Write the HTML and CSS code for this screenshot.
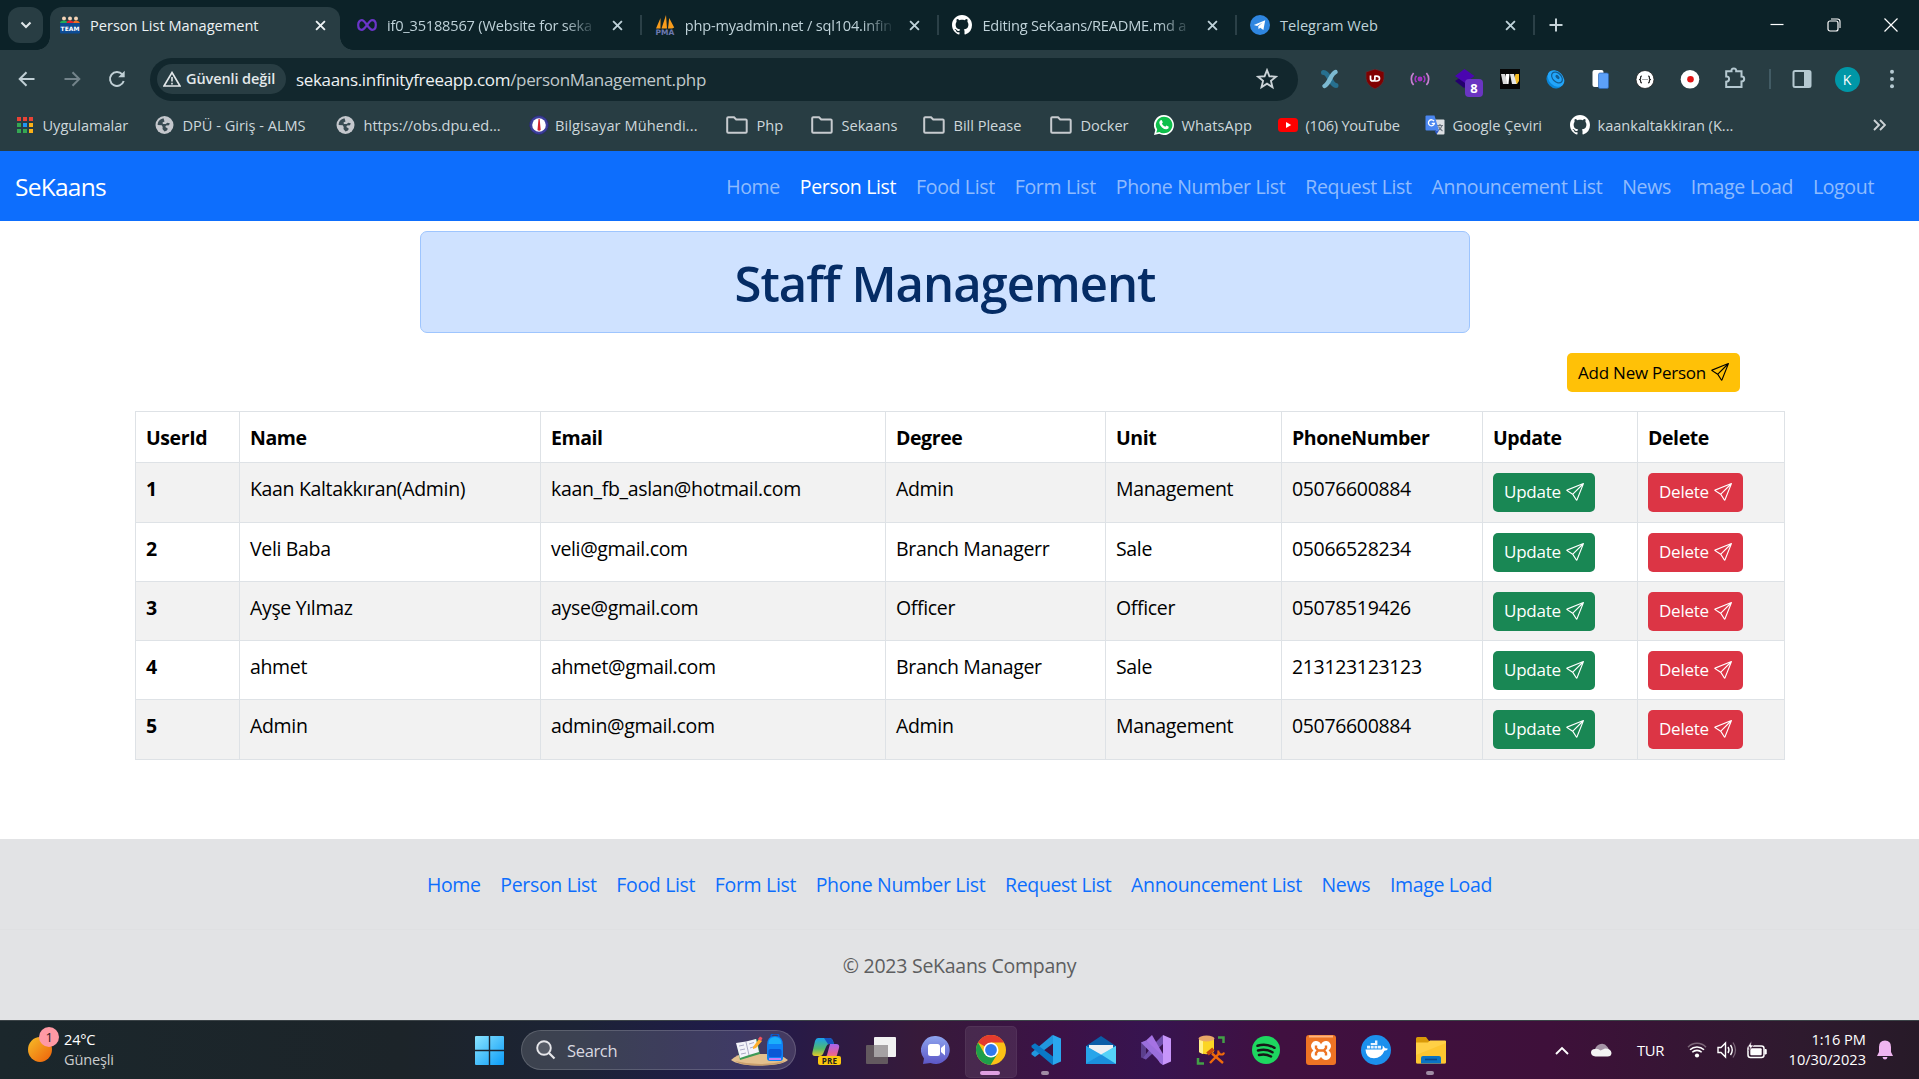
FILE: index.html
```html
<!DOCTYPE html>
<html lang="en">
<head>
<meta charset="utf-8">
<title>Person List Management</title>
<link rel="stylesheet" href="styles.css">
</head>
<body>
<svg class="defs" aria-hidden="true">
  <symbol id="send" viewBox="0 0 16 16"><path fill="currentColor" d="M15.854.146a.5.5 0 0 1 .11.54l-5.819 14.547a.75.75 0 0 1-1.329.124l-3.178-4.995L.643 7.184a.75.75 0 0 1 .124-1.33L15.314.037a.5.5 0 0 1 .54.11ZM6.636 10.07l2.761 4.338L14.13 2.576 6.636 10.07Zm6.787-8.201L1.591 6.602l4.339 2.76 7.494-7.493Z"/></symbol>
  <symbol id="github" viewBox="0 0 16 16"><path fill="#fff" d="M8 0C3.58 0 0 3.58 0 8c0 3.54 2.29 6.53 5.47 7.59.4.07.55-.17.55-.38 0-.19-.01-.82-.01-1.49-2.01.37-2.53-.49-2.69-.94-.09-.23-.48-.94-.82-1.13-.28-.15-.68-.52-.01-.53.63-.01 1.08.58 1.23.82.72 1.21 1.87.87 2.33.66.07-.52.28-.87.51-1.07-1.78-.2-3.64-.89-3.64-3.95 0-.87.31-1.59.82-2.15-.08-.2-.36-1.02.08-2.12 0 0 .67-.21 2.2.82.64-.18 1.32-.27 2-.27.68 0 1.36.09 2 .27 1.53-1.04 2.2-.82 2.2-.82.44 1.1.16 1.92.08 2.12.51.56.82 1.27.82 2.15 0 3.07-1.87 3.75-3.65 3.95.29.25.54.73.54 1.48 0 1.07-.01 1.93-.01 2.2 0 .21.15.46.55.38A8.013 8.013 0 0016 8c0-4.42-3.58-8-8-8z"/></symbol>
  <symbol id="close" viewBox="0 0 10 10"><path d="M1 1l8 8M9 1l-8 8" fill="none" stroke="currentColor" stroke-width="1.7"/></symbol>
  <symbol id="folder" viewBox="0 0 22 18"><path d="M1.200 2.200q0-1 1-1h5.800l2.200 2.300h9.500q1 0 1 1v11.200q0 1-1 1H2.200q-1 0-1-1z" fill="none" stroke="#c7cbcf" stroke-width="2"/></symbol>
  <symbol id="globe" viewBox="0 0 18 18"><circle cx="9" cy="9" r="9" fill="#c5c8cd"/><path d="M8 2.200C4 3 2 6 2.200 9l4 .3 1 1.700-.2 2 2 2.400c2 0 3.200-1.500 3.200-2.800L9.800 11l.7-1.500 3-.2.8-2-2.500-.6-1.600 1.300H7.400L7 6.400l2-1z" fill="#3a4c53"/></symbol>
</svg>

<header class="chrome">
  <div class="tabstrip">
    <div class="tab-search"><svg width="12" height="8" viewBox="0 0 12 8"><path d="M1.500 1.500L6 6l4.500-4.500" fill="none" stroke="#dfe6e9" stroke-width="2.100"/></svg></div>
    <div class="tab active">
      <svg class="fav" viewBox="0 0 20 18"><g fill="#f5d3b5"><circle cx="4" cy="2.600" r="2"/><circle cx="10" cy="2.600" r="2"/><circle cx="16" cy="2.600" r="2"/></g><path d="M0 7q0-2.500 4-2.500T7 7z" fill="#1faa59"/><path d="M13 7q0-2.500 3-2.500T20 7z" fill="#f26b21"/><path d="M6.500 7q0-2.500 3.500-2.500T13.500 7z" fill="#e5202e"/><rect y="7" width="20" height="10.500" rx="1" fill="#0d4c94"/><text x="10" y="14.600" text-anchor="middle" class="team">TEAM</text></svg>
      <span class="tab-title">Person List Management</span>
      <svg class="x"><use href="#close"/></svg>
    </div>
    <div class="tab nosep">
      <svg class="fav" viewBox="0 0 20 18"><path d="M10 9C7.500 5.500 6.500 4.200 4.800 4.200 2.700 4.200 1.200 6 1.200 9s1.500 4.800 3.600 4.800C6.500 13.800 7.500 12.500 10 9s3.500-4.800 5.200-4.800c2.100 0 3.600 1.800 3.600 4.800s-1.500 4.800-3.600 4.800C13.500 13.800 12.500 12.500 10 9z" fill="none" stroke="#6b35c9" stroke-width="2.200"/></svg>
      <span class="tab-title fade">if0_35188567 (Website for seka</span>
      <svg class="x"><use href="#close"/></svg>
    </div>
    <div class="tab">
      <svg class="fav" viewBox="0 0 20 20"><path d="M1 13.500L5.500 3v10.500zM6.500 13.500L11 0l1 13.500zM13 13.500L14.200 3l5 9.500-2 1z" fill="#f89c1c"/><text x="10" y="19.700" text-anchor="middle" class="pma">PMA</text></svg>
      <span class="tab-title fade">php-myadmin.net / sql104.infin</span>
      <svg class="x"><use href="#close"/></svg>
    </div>
    <div class="tab">
      <svg class="fav"><use href="#github"/></svg>
      <span class="tab-title fade">Editing SeKaans/README.md a</span>
      <svg class="x"><use href="#close"/></svg>
    </div>
    <div class="tab">
      <svg class="fav" viewBox="0 0 20 20"><circle cx="10" cy="10" r="10" fill="#2f86e0"/><path d="M3.800 10L15.200 5.200 13.400 15l-3.200-2.300-1.600 1.600-.4-3.100 4.400-3.600-5.500 3.400z" fill="#fff"/></svg>
      <span class="tab-title">Telegram Web</span>
      <svg class="x"><use href="#close"/></svg>
    </div>
    <svg class="plus" viewBox="0 0 14 14"><path d="M7 .5v13M.5 7h13" stroke="#c6d3d8" stroke-width="2"/></svg>
    <div class="winctl">
      <svg viewBox="0 0 14 14"><path d="M.5 6.500h13" stroke="#fff" stroke-width="1.200"/></svg>
      <svg viewBox="0 0 14 14"><rect x="1" y="3" width="10" height="10" rx="2" fill="none" stroke="#fff" stroke-width="1.200"/><path d="M4 1h6.500q2.500 0 2.500 2.500V10" fill="none" stroke="#fff" stroke-width="1.100"/></svg>
      <svg viewBox="0 0 14 14"><path d="M.5.5l13 13M13.500.5l-13 13" stroke="#fff" stroke-width="1.200"/></svg>
    </div>
  </div>

  <div class="toolbar">
    <div class="navbtns">
      <svg viewBox="0 0 20 20"><path d="M17.500 10H3M9.500 3.200L2.700 10l6.800 6.800" fill="none" stroke="#c0cfd5" stroke-width="2"/></svg>
      <svg viewBox="0 0 20 20"><path d="M2.500 10H17M10.500 3.200l6.800 6.800-6.800 6.800" fill="none" stroke="#73838a" stroke-width="2"/></svg>
      <svg viewBox="0 0 20 20"><path d="M16.700 12A7 7 0 1 1 15.300 5.300" fill="none" stroke="#c0cfd5" stroke-width="2"/><path d="M17.700 1.800V8.300H11.200z" fill="#c0cfd5"/></svg>
    </div>
    <div class="omnibox">
      <span class="chip"><svg width="18" height="16" viewBox="0 0 18 16"><path d="M9 1.500L17 15H1z" fill="none" stroke="#e3e8ea" stroke-width="1.600"/><path d="M9 6v4.500M9 11.800v1.600" stroke="#e3e8ea" stroke-width="1.600"/></svg>Güvenli değil</span>
      <span class="url"><b>sekaans.infinityfreeapp.com</b>/personManagement.php</span>
      <svg class="star" viewBox="0 0 20 20"><path d="M10 2l2.200 5.500 5.900.4-4.500 3.800 1.400 5.800-5-3.200-5 3.200 1.400-5.800L1.900 7.900l5.900-.4z" fill="none" stroke="#cbd3d7" stroke-width="1.700"/></svg>
    </div>
    <div class="exts">
      <svg viewBox="0 0 20 20"><path d="M3.500 3.500q3 0 6.500 6.500t6 6.500" fill="none" stroke="#27708f" stroke-width="5" stroke-linecap="round"/><path d="M15.500 3Q13 4 10 10t-5.500 7" fill="none" stroke="#7cb9d0" stroke-width="4.500" stroke-linecap="round"/></svg>
      <svg viewBox="0 0 20 20"><path d="M10 0l9 3v6.500Q18.500 16 10 20 1.500 16 1 9.500V3z" fill="#800000" stroke="#50343a" stroke-width=".8"/><path d="M5.500 6.500v3.200q0 2.300 2.200 2.300t2.200-2.300V6.500M10 7.200h1.500q3 0 3 2.400T11.500 12H9.500" fill="none" stroke="#fff" stroke-width="1.700"/></svg>
      <svg viewBox="0 0 20 20" fill="none" stroke="#a835c4" stroke-width="1.700"><circle cx="10" cy="10" r="1.600" fill="#a220c0"/><path d="M6.500 6.800a4.600 4.600 0 0 0 0 6.400M13.500 6.800a4.600 4.600 0 0 1 0 6.400"/><path d="M3.600 4a9 9 0 0 0 0 12M16.400 4a9 9 0 0 1 0 12" stroke="#c780d2"/></svg>
      <span class="ext-badged"><svg viewBox="0 0 20 20"><path d="M0 12l9-6 9 6-9 7z" fill="#25006e"/><path d="M0 7l9.500-7 10 7-9.500 7z" fill="#4a05b0"/></svg><i>8</i></span>
      <svg viewBox="0 0 20 20"><rect width="20" height="20" fill="#060606"/><path d="M6 5h3.500l-1 10H4z" fill="#fff"/><path d="M1 5h4l2.500 10H3z" fill="#d9d9d9"/><path d="M15.500 5H19v7l-2 3h-4z" fill="#f4bc27"/><path d="M10 5h4l2.500 10H12z" fill="#e6e6e6"/></svg>
      <svg viewBox="0 0 20 20"><ellipse cx="9.500" cy="11.500" rx="7" ry="9" transform="rotate(-45 9.500 11.500)" fill="#0a86d8"/><ellipse cx="11" cy="9.500" rx="7" ry="9.500" transform="rotate(-45 11 9.500)" fill="#22a5fa"/><ellipse cx="12" cy="8.500" rx="4.300" ry="6.300" transform="rotate(-45 12 8.500)" fill="none" stroke="#135c91" stroke-width="1.200"/><ellipse cx="12.500" cy="8" rx="1.500" ry="2.500" transform="rotate(-45 12.500 8)" fill="#135c91"/></svg>
      <svg viewBox="0 0 20 20"><rect x="2.500" y="1" width="11" height="17" rx="2" fill="#fff"/><rect x="8.500" y="4" width="10" height="15.500" rx="1.500" fill="#5ca0f8" stroke="#2b65b5" stroke-width=".7"/></svg>
      <svg viewBox="0 0 20 20"><circle cx="10" cy="10.500" r="9" fill="#fff" stroke="#222" stroke-width=".8"/><path d="M7 7q-1.500 0-1.400 1.800T4 10.500q1.700 0 1.600 1.700T7 14M13 7q1.500 0 1.400 1.800T16 10.500q-1.700 0-1.600 1.700T13 14" fill="none" stroke="#222" stroke-width="1.200"/><path d="M7.500 10.500h1M9.500 10.500h1M11.500 10.500h1" stroke="#555" stroke-width="1.200"/></svg>
      <svg viewBox="0 0 20 20"><circle cx="10" cy="10.300" r="9.300" fill="#fff"/><circle cx="10.500" cy="10.300" r="3.300" fill="#e11414"/></svg>
      <svg class="puzzle" viewBox="0 0 22 22"><path d="M2.200 4.200h5.300q-.3-2.700 2.300-2.700t2.400 2.700h5.300v5.300q2.700 0 2.700 2.400t-2.700 2.500v5.700H2.200v-5.400q2.900 0 2.900-2.700t-2.900-2.600z" fill="none" stroke="#b5c9d1" stroke-width="2"/></svg>
    </div>
    <i class="vsep"></i>
    <div class="exts tail">
      <svg viewBox="0 0 20 20"><rect x="1.500" y="2" width="17" height="16" rx="1.500" fill="none" stroke="#b5c9d1" stroke-width="2"/><path d="M12 2h6.500v16H12z" fill="#b5c9d1"/></svg>
      <span class="avatar">K</span>
      <svg viewBox="0 0 20 20" fill="#b5c9d1"><circle cx="10" cy="2.800" r="2"/><circle cx="10" cy="10" r="2"/><circle cx="10" cy="17.200" r="2"/></svg>
    </div>
  </div>

  <div class="bookmarks">
    <span><svg width="18" height="18" viewBox="0 0 18 18"><path d="M1 1h4v4H1zM7 1h4v4H7zM13 1h4v4h-4z" fill="#ea4335"/><path d="M1 7h4v4H1zM1 13h4v4H1z" fill="#34a853"/><path d="M7 7h4v4H7z" fill="#2196f3"/><path d="M7 13h4v4H7z" fill="#34a853"/><path d="M13 7h4v4h-4zM13 13h4v4h-4z" fill="#fbb117"/></svg>Uygulamalar</span>
    <span><svg width="19" height="18"><use href="#globe"/></svg>DPÜ - Giriş - ALMS</span>
    <span><svg width="19" height="18"><use href="#globe"/></svg>https://obs.dpu.ed...</span>
    <span class="wide"><svg width="20" height="20" viewBox="0 0 20 20"><circle cx="10" cy="10" r="9.300" fill="#3d3f9c" stroke="#2a2b75" stroke-dasharray="2 1"/><circle cx="10" cy="10" r="6.800" fill="#fff"/><path d="M9.500 4h1.200l1 11q-1.500 1.500-3.200 0z" fill="#d3212d"/></svg>Bilgisayar Mühendi...</span>
    <span><svg width="22" height="18"><use href="#folder"/></svg>Php</span>
    <span><svg width="22" height="18"><use href="#folder"/></svg>Sekaans</span>
    <span><svg width="22" height="18"><use href="#folder"/></svg>Bill Please</span>
    <span><svg width="22" height="18"><use href="#folder"/></svg>Docker</span>
    <span class="wide"><svg width="20" height="20" viewBox="0 0 20 20"><path d="M10 0a10 10 0 1 1-4.800 18.800L0 20l1.300-5A10 10 0 0 1 10 0z" fill="#fff"/><path d="M10 1.700a8.300 8.300 0 1 1-4.500 15.200l-3.200.9.900-3.200A8.300 8.300 0 0 1 10 1.700z" fill="#0fbf4b"/><path d="M6.300 5.500q1.300-1 1.900.5l.6 1.500-.9 1.200q1 2 3.400 3l1.100-1.200 2.400 1.200q.2 2.200-2.200 2.600-2.200.2-4.600-1.900Q5.300 10 5.300 7.700q0-1.400 1-2.200z" fill="#fff"/></svg>WhatsApp</span>
    <span class="tight"><svg width="20" height="20" viewBox="0 0 20 20"><rect y="3" width="20" height="14" rx="3.500" fill="#f00"/><path d="M8 7l5.200 3L8 13z" fill="#fff"/></svg>(106) YouTube</span>
    <span><svg width="20" height="20" viewBox="0 0 20 20"><path d="M8 4.500h10.500q1 0 1 1v13q0 1-1 1H12z" fill="#dcdfe3"/><path d="M12 10.500h6M15 9v1.500M17 10.500q-1 3.500-4 5M13.500 11.500q1 2.500 4 4.500" stroke="#6d7680" fill="none" stroke-width="1.100"/><path d="M1.500.5h8L14 15.500H1.500q-1 0-1-1v-13q0-1 1-1z" fill="#4a86f0"/><path d="M9 6.200A3 3 0 1 0 9.400 8.300H6.700" fill="none" stroke="#fff" stroke-width="1.300"/><path d="M9.500 15.500H14l-2.500 4z" fill="#2d58c5"/></svg>Google Çeviri</span>
    <span><svg width="20" height="20"><use href="#github"/></svg>kaankaltakkiran (K...</span>
    <svg class="more" width="13" height="12" viewBox="0 0 13 12"><path d="M1 1l5 5-5 5M7 1l5 5-5 5" fill="none" stroke="#cdd3d6" stroke-width="1.900"/></svg>
  </div>
</header>

<main class="page">
  <nav class="navbar">
    <a class="brand">SeKaans</a>
    <ul>
      <li>Home</li><li class="current">Person List</li><li>Food List</li><li>Form List</li><li>Phone Number List</li><li>Request List</li><li>Announcement List</li><li>News</li><li>Image Load</li><li>Logout</li>
    </ul>
  </nav>
  <div class="alert"><h1>Staff Management</h1></div>
  <div class="actions"><a class="btn warning">Add New Person <svg><use href="#send"/></svg></a></div>
  <table>
    <colgroup><col class="c1"><col class="c2"><col class="c3"><col class="c4"><col class="c5"><col class="c6"><col class="c7"><col class="c8"></colgroup>
    <thead><tr><th>UserId</th><th>Name</th><th>Email</th><th>Degree</th><th>Unit</th><th>PhoneNumber</th><th>Update</th><th>Delete</th></tr></thead>
    <tbody>
      <tr><th>1</th><td>Kaan Kaltakkıran(Admin)</td><td>kaan_fb_aslan@hotmail.com</td><td>Admin</td><td>Management</td><td>05076600884</td><td><a class="btn success">Update <svg><use href="#send"/></svg></a></td><td><a class="btn danger">Delete <svg><use href="#send"/></svg></a></td></tr>
      <tr><th>2</th><td>Veli Baba</td><td>veli@gmail.com</td><td>Branch Managerr</td><td>Sale</td><td>05066528234</td><td><a class="btn success">Update <svg><use href="#send"/></svg></a></td><td><a class="btn danger">Delete <svg><use href="#send"/></svg></a></td></tr>
      <tr><th>3</th><td>Ayşe Yılmaz</td><td>ayse@gmail.com</td><td>Officer</td><td>Officer</td><td>05078519426</td><td><a class="btn success">Update <svg><use href="#send"/></svg></a></td><td><a class="btn danger">Delete <svg><use href="#send"/></svg></a></td></tr>
      <tr><th>4</th><td>ahmet</td><td>ahmet@gmail.com</td><td>Branch Manager</td><td>Sale</td><td>213123123123</td><td><a class="btn success">Update <svg><use href="#send"/></svg></a></td><td><a class="btn danger">Delete <svg><use href="#send"/></svg></a></td></tr>
      <tr><th>5</th><td>Admin</td><td>admin@gmail.com</td><td>Admin</td><td>Management</td><td>05076600884</td><td><a class="btn success">Update <svg><use href="#send"/></svg></a></td><td><a class="btn danger">Delete <svg><use href="#send"/></svg></a></td></tr>
    </tbody>
  </table>
  <footer>
    <ul><li>Home</li><li>Person List</li><li>Food List</li><li>Form List</li><li>Phone Number List</li><li>Request List</li><li>Announcement List</li><li>News</li><li>Image Load</li></ul>
    <p>© 2023 SeKaans Company</p>
  </footer>
</main>

<div class="taskbar">
  <div class="weather">
    <div class="sun"><i>1</i></div>
    <div><div>24°C</div><div class="dim">Güneşli</div></div>
  </div>
  <svg class="start" viewBox="0 0 29 29"><defs><linearGradient id="win" x1="0" y1="0" x2="1" y2="1"><stop offset="0" stop-color="#8be4ff"/><stop offset="1" stop-color="#0a9cf8"/></linearGradient></defs><path d="M1 0h12.800v13.800H0V1q0-1 1-1zM15.200 0H28q1 0 1 1v12.800H15.200zM0 15.200h13.800V29H1q-1 0-1-1zM15.200 15.200H29V28q0 1-1 1H15.200z" fill="url(#win)"/></svg>
  <div class="search">
    <svg width="20" height="20" viewBox="0 0 20 20"><circle cx="8" cy="8" r="6.800" fill="#ffffff22" stroke="#e6e6ea" stroke-width="1.900"/><path d="M13 13l5.500 5.500" stroke="#e6e6ea" stroke-width="2.200"/></svg>
    <span>Search</span>
    <svg class="art" viewBox="0 0 57 32"><path d="M0 26q6-6 14-6h26q10 0 17 6-6 5.500-28 5.500T0 26z" fill="#e3c08e"/><path d="M4 27q25 6 50 0-6 4.500-25 4.500T4 27z" fill="#c99f6c"/><path d="M6 11l20-6 3 15-20 6z" fill="#3d9a55"/><path d="M5 9l10-1.500L25 5l3 13-10 3-9 3z" fill="#f3f3fa"/><path d="M15 8l3 13M8 12l5-1M9 16l5-1M10 20l5-1M18 10l5-1.500M19 14l5-1.500" stroke="#a9a9c4" stroke-width="1"/><path d="M22 13l6-8 3 2-6 7-3 1z" fill="#ffb02e"/><path d="M27 5l2-2.500 2.500 1.500-1.500 3z" fill="#f2535d"/><rect x="40" y="0" width="8" height="5" rx="2.500" fill="none" stroke="#0a5bd0" stroke-width="1.500"/><path d="M36 11q0-9 8-9t8 9v13q0 3-3 3H39q-3 0-3-3z" fill="#1081f5"/><path d="M37.500 10q0-7 6.500-7t6.500 7z" fill="#1ab0fb"/><rect x="37.500" y="15" width="13" height="8" rx="2" fill="#0a58d6"/><path d="M38 25h12" stroke="#c77df5" stroke-width="2"/></svg>
  </div>
  <div class="apps">
    <span><svg viewBox="0 0 30 30"><defs><linearGradient id="cpa" x1="0" y1="0" x2="0" y2="1"><stop offset="0" stop-color="#1aa0ee"/><stop offset=".6" stop-color="#52b96c"/><stop offset="1" stop-color="#e5c927"/></linearGradient><linearGradient id="cpb" x1="0" y1="0" x2="0" y2="1"><stop offset="0" stop-color="#a566f0"/><stop offset=".6" stop-color="#e4609c"/><stop offset="1" stop-color="#fb8c5a"/></linearGradient></defs><path d="M7 3h11q3 0 4 3l1 3h-5q-2 0-3 3l-3 7q-1 2-3 2H4q-3.500 0-2.500-4L4 6q1-3 3-3z" fill="url(#cpa)"/><path d="M13 3h5q3 0 4 3l1 3h-6z" fill="#1553c0"/><path d="M19 9h6q4 0 3 4l-2 7q-1 4-5 4h-9q3-1 4-4z" fill="url(#cpb)"/><rect x="7" y="21" width="23" height="9" rx="2" fill="#fcc80e"/><text x="18.500" y="28.600" text-anchor="middle" class="pre">PRE</text></svg></span>
    <span><svg viewBox="0 0 30 30"><rect y="10" width="22" height="19" rx="1" fill="#63595f"/><rect x="8" y="2" width="22" height="20" rx="1" fill="#f1f1f1"/><path d="M8 10h14v12H8z" fill="#a5a1a3"/></svg></span>
    <span><svg viewBox="0 0 30 30"><defs><linearGradient id="cht" x1="0" y1="0" x2="0" y2="1"><stop offset="0" stop-color="#8da4ee"/><stop offset="1" stop-color="#5c56c6"/></linearGradient></defs><path d="M15 1a14 14 0 1 1-5.500 27L2 29l1-5.500A14 14 0 0 1 15 1z" fill="url(#cht)"/><rect x="7" y="9" width="12" height="12" rx="2.500" fill="#fff"/><path d="M20 13l4-3.500v11L20 17z" fill="#fff"/></svg></span>
    <span class="running focus"><svg viewBox="0 0 30 30"><circle cx="15" cy="15" r="15" fill="#fbc116"/><path d="M15 15L2 7.500A15 15 0 0 1 28 7.500H15z" fill="#e33b2e"/><path d="M2 7.500A15 15 0 0 0 14.500 30L21.500 18.700 8.500 18.700z" fill="#1e9e4a"/><circle cx="15" cy="15" r="7.500" fill="#fff"/><circle cx="15" cy="15" r="5.900" fill="#3079ed"/></svg></span>
    <span class="running"><svg viewBox="0 0 30 30"><path d="M22 0l8 3.500v23L22 30V0z" fill="#2aa7ee"/><path d="M22 0v8.500L4 22l-3.500-2.500v-1.800L21 .5z" fill="#2196de"/><path d="M22 30v-8.500L4 8.200.5 10.500v1.800L21 29.500z" fill="#0a78c6"/></svg></span>
    <span><svg viewBox="0 0 30 30"><path d="M0 11L15 1l15 10v6H0z" fill="#0a5da8"/><path d="M3 10h24v12H3z" fill="#eceff3"/><path d="M0 11l15 9.500L30 11v17q0 1-1 1H1q-1 0-1-1z" fill="#36b8f0"/><path d="M0 29L15 19.500 0 11z" fill="#27a5ea"/><path d="M15 19.500L30 29V11z" fill="#55d2f8"/><path d="M0 28.500L15 19.500l15 9.500H1z" fill="#1b8fdd"/></svg></span>
    <span><svg viewBox="0 0 30 30"><path d="M22 0l8 3.500v23L22 30z" fill="#c795fa"/><path d="M0 7.500L5 5.500V24.500L0 22.500z" fill="#5b3f8c"/><path d="M22 0v9L5 24.500 2 23 12 10z" fill="#6f4fac"/><path d="M5 5.500L11 0 22 19v11L19 28z" fill="#a573e3"/><path d="M0 7.500L5 5.500 22 21v9z" fill="#9a6fdc"/></svg></span>
    <span><svg viewBox="0 0 30 30"><path d="M3 3v14q7.500 4.500 15 0V3z" fill="#fbd524"/><path d="M3 3v14q2 1.500 4 2V5z" fill="#fff08a"/><ellipse cx="10.500" cy="3.500" rx="8" ry="3" fill="#e9a868"/><path d="M22 2.500h5.500V8M2 23v5.500h6" fill="none" stroke="#43a047" stroke-width="2.500"/><path d="M14 28l10-10.500M16 18.500L27 28" stroke="#f06a0a" stroke-width="2.400"/><path d="M11.500 19l6-5" stroke="#c4480a" stroke-width="4"/><path d="M22.500 15.500q-1 3.500 2 4t3.500-2" fill="none" stroke="#f06a0a" stroke-width="2"/></svg></span>
    <span><svg viewBox="0 0 30 30"><circle cx="15" cy="15" r="14" fill="#1ed760"/><path d="M6.500 10.800q9-2.600 17 2M7 15.500q8-2.200 14.500 1.800M8 20q6.500-1.600 12 1.500" fill="none" stroke="#171717" stroke-width="2.500" stroke-linecap="round"/></svg></span>
    <span><svg viewBox="0 0 30 30"><rect width="30" height="30" rx="3" fill="#ee7424"/><path d="M3 1.500h24" stroke="#ffb27c" stroke-width="2"/><path d="M10 11l5 4 5-4M10 20l5-4.500 5 4.500" fill="none" stroke="#fff" stroke-width="10" stroke-linecap="round" stroke-linejoin="round"/><path d="M10 10.500v2.500l2 2.500-2 2.500v2.500M20 10.500v2.500l-2 2.500 2 2.500v2.500M12 15.500h6" fill="none" stroke="#ee7424" stroke-width="2.400" stroke-linejoin="round"/><path d="M13.500 6h3L15 9.500zM13.500 25h3L15 22z" fill="#ee7424"/></svg></span>
    <span><svg viewBox="0 0 30 30"><circle cx="15" cy="15" r="15" fill="#1c90ed"/><path d="M4.500 14.500h16.500q1.200-1.500.6-4 1.800.9 2.300 2.800 1.800-.3 3.100.5-.9 2-3.600 2-3 7.500-10.400 7.500-8.200 0-8.500-8.800z" fill="#fff"/><path d="M6 10.800h3v2.700H6zM9.700 10.800h3v2.700h-3zM13.400 10.800h3v2.700h-3zM17 10.800h3v2.700h-3zM9.700 8h6.700v2H9.700zM14 5.500h2.400V8H14z" fill="#e8f4ff"/></svg></span>
    <span class="running"><svg viewBox="0 0 30 30"><path d="M0 3.500Q0 2 1.500 2H10l3 4H30v20H0z" fill="#d99a08"/><path d="M0 7.500h12L14 5.500h15q1 0 1 1V27q0 1.500-1.500 1.500h-27Q0 28.500 0 27z" fill="#ffd046"/><path d="M0 20L30 8v19q0 1.500-1.500 1.500h-27Q0 28.500 0 27z" fill="#fbc021" opacity=".6"/><path d="M5 28.500v-5.500Q5 21 7 21h16q2 0 2 2v5.500z" fill="#0a74c4"/><path d="M9 24.500h12" stroke="#0a4a8c" stroke-width="1.600"/></svg></span>
  </div>
  <div class="tray">
    <svg class="chev" viewBox="0 0 14 9"><path d="M1 8l6-6 6 6" fill="none" stroke="#fff" stroke-width="1.900"/></svg>
    <svg class="cloud" viewBox="0 0 21 14"><path d="M4 10Q3 4 8 1.500 13-1 16.500 4L19 8z" fill="#a595a6"/><path d="M4.500 13.500Q0 13 0 9.500T4 6q3-.6 5.500 1.500L14 5.500q6 0 6.500 4.500-.2 3.500-4 3.500z" fill="#f4f4f4"/></svg>
    <span class="lang">TUR</span>
    <svg class="wifi" viewBox="0 0 20 16"><path d="M1 5.200a12.500 12.500 0 0 1 18 0" fill="none" stroke="#7b6678" stroke-width="1.500"/><path d="M3 7.800a10 10 0 0 1 14 0M5.300 10.300a6.700 6.700 0 0 1 9.400 0" fill="none" stroke="#fff" stroke-width="1.600"/><circle cx="10" cy="13.500" r="2.100" fill="#fff"/></svg>
    <svg class="vol" viewBox="0 0 20 18"><path d="M1 6.500h3L8.500 2v14L4 11.500H1z" fill="none" stroke="#fff" stroke-width="1.400"/><path d="M11 6q2 3 0 6M13.500 4q3.500 5 0 10" fill="none" stroke="#fff" stroke-width="1.400"/><path d="M16 1.500q5 7.500 0 15" fill="none" stroke="#7b6678" stroke-width="1.300"/></svg>
    <svg class="bat" viewBox="0 0 20 18"><rect x="1" y="5" width="16" height="11.500" rx="2.500" fill="none" stroke="#fff" stroke-width="1.500"/><rect x="3.300" y="7.300" width="11.400" height="7" rx="1" fill="#fff"/><path d="M18 8.500h1.200v4.500H18z" fill="#fff" stroke="#fff"/><path d="M4.500 0L.5 6h2.500L2 10l4.500-6H4z" fill="#fff" stroke="#3a1838" stroke-width=".6"/></svg>
    <div class="clock"><div>1:16 PM</div><div>10/30/2023</div></div>
    <svg class="bell" viewBox="0 0 18 20"><path d="M9 .5q6 0 6 6.500v5l2 4H1l2-4V7Q3 .5 9 .5zM6.500 17h5q-.5 2.500-2.500 2.500T6.500 17z" fill="#efb5f0"/></svg>
  </div>
</div>
</body>
</html>
```
FILE: styles.css
```css
* { box-sizing: border-box; }
body {
  margin: 0;
  width: 1919px;
  height: 1079px;
  overflow: hidden;
  background: #fff;
  font-family: "Open Sans", "Noto Sans", sans-serif;
  font-size: 19.5px;
  letter-spacing: -0.34px;
  color: #000;
  display: flex;
  flex-direction: column;
}
ul { list-style: none; margin: 0; padding: 0; }
svg { display: block; flex: none; }
i { font-style: normal; }
.defs { width: 0; height: 0; position: absolute; }

/* browser frame */
.chrome {
  height: 151px;
  flex: none;
  background: #283d43;
  font-size: 14.6px;
  letter-spacing: -0.02px;
  color: #cdd7db;
}
.tabstrip {
  height: 50px;
  background: #0c2228;
  display: flex;
  align-items: center;
  padding-left: 8px;
}
.tab-search {
  width: 35px;
  height: 36px;
  border-radius: 12px;
  background: #283d43;
  display: grid;
  place-items: center;
  margin-right: 7px;
}
.tab {
  width: 297.700px;
  height: 50px;
  display: flex;
  align-items: center;
  padding: 0 15px 0 17px;
  position: relative;
  color: #bfd2d9;
}
.tab.active {
  width: 290px;
  height: 43px;
  align-self: flex-end;
  background: #283d43;
  border-radius: 12px 12px 0 0;
  color: #edf2f4;
  padding: 0 14px 7px 10px;
}
.tab.active::before,
.tab.active::after {
  content: "";
  position: absolute;
  bottom: 0;
  width: 13px;
  height: 13px;
  background: radial-gradient(circle at 0 0, transparent 12.500px, #283d43 13px);
  left: -13px;
}
.tab.active::after { left: 290px; transform: scaleX(-1); }
.tab:not(.active)::after {
  content: "";
  position: absolute;
  right: -4px;
  top: 15px;
  width: 2px;
  height: 20px;
  background: #2b4047;
}
.fav { width: 20px; height: 20px; margin-right: 10px; }
.team { font: 700 6px "DejaVu Sans", sans-serif; fill: #fff; letter-spacing: 0; }
.pma { font: 700 7.500px "DejaVu Sans", sans-serif; fill: #6c78af; letter-spacing: 0; }
.tab-title { flex: 1; white-space: nowrap; line-height: 24px; }
.fade { letter-spacing: -0.200px; -webkit-mask-image: linear-gradient(90deg, #000 84%, transparent 100%); mask-image: linear-gradient(90deg, #000 84%, transparent 100%); }
.x { width: 11px; height: 11px; margin-left: 14px; }
.plus { width: 14px; height: 14px; margin-left: 18px; }
.winctl { margin-left: auto; display: flex; gap: 43px; padding-right: 21px; }
.winctl svg { width: 14px; height: 14px; }

.toolbar { height: 58px; display: flex; align-items: center; }
.navbtns { width: 150px; display: flex; gap: 25px; padding-left: 17px; }
.navbtns svg { width: 20px; height: 20px; }
.omnibox {
  width: 1148px;
  height: 43px;
  border-radius: 22px;
  background: #12272d;
  display: flex;
  align-items: center;
  padding: 0 20px 0 7px;
}
.chip {
  height: 30px;
  width: 129px;
  border-radius: 15px;
  background: #283d43;
  display: flex;
  align-items: center;
  gap: 5px;
  padding: 0 0 1px 6px;
  color: #e3e8ea;
  font-weight: 600;
  font-size: 14.500px;
  letter-spacing: -0.100px;
  white-space: nowrap;
}
.url { flex: 1; margin-left: 10px; font-size: 17px; letter-spacing: -0.330px; color: #c0c9cc; }
.url b { font-weight: 400; color: #eef2f3; }
.star { width: 22px; height: 22px; }
.exts { display: flex; padding-left: 9.500px; }
.exts > * { width: 20px; height: 20px; margin: 0 12.500px; }
.exts .puzzle { width: 22px; height: 22px; margin: -2px 11.500px 0; }
.ext-badged { position: relative; }
.ext-badged i {
  position: absolute;
  left: 10px;
  top: 10px;
  width: 18px;
  height: 18px;
  border-radius: 4px;
  background: #6a35c2;
  color: #fff;
  font-weight: 700;
  font-size: 13px;
  line-height: 18px;
  text-align: center;
}
.vsep { width: 2px; height: 20px; background: #425b64; margin-left: 11px; }
.exts.tail { padding-left: 9px; align-items: center; }
.exts .avatar {
  width: 25px;
  height: 25px;
  margin: 0 10px;
  border-radius: 50%;
  background: #0097a7;
  color: #fff;
  font-size: 14px;
  line-height: 25px;
  text-align: center;
}

.bookmarks {
  height: 34px;
  display: grid;
  grid-template-columns: 139px 181px 193px 197px 85px 112px 127px 104px 124px 147px 145px 303px auto;
  align-items: center;
  padding-left: 16px;
}
.bookmarks span { display: flex; align-items: center; gap: 8.500px; white-space: nowrap; }
.bookmarks span:nth-child(n+9) { gap: 7.500px; }
.bookmarks .tight { letter-spacing: -0.250px; }
.bookmarks .wide { letter-spacing: 0.080px; gap: 6px; }

/* page */
.page { height: 869px; flex: none; display: flex; flex-direction: column; }
.navbar {
  height: 70px;
  flex: none;
  background: #0d6efd;
  display: flex;
  align-items: center;
  justify-content: space-between;
  padding: 0 45px 0 15px;
}
.brand { font-size: 24.500px; letter-spacing: -0.750px; color: #fff; }
.navbar ul { display: flex; gap: 19.900px; color: rgba(255, 255, 255, .55); }
.navbar .current { color: #fff; }
.alert {
  width: 1050px;
  height: 102px;
  margin: 10px 0 0 420px;
  flex: none;
  background: #cfe2ff;
  border: 1px solid #9ec5fe;
  border-radius: 7px;
  display: grid;
  place-items: center;
}
h1 { margin: 0; padding-top: 2px; font-size: 49px; font-weight: 600; line-height: 60px; letter-spacing: -1px; color: #052c65; }
.actions { height: 78px; flex: none; padding: 20px 179px 0 0; display: flex; justify-content: flex-end; align-items: flex-start; }
.btn {
  display: inline-flex;
  align-items: center;
  gap: 5px;
  height: 38.500px;
  padding: 0 11px;
  border-radius: 5px;
  font-size: 17px;
  letter-spacing: -0.250px;
  white-space: nowrap;
  vertical-align: top;
}
.btn svg { width: 18px; height: 18px; margin-top: -1px; }
.warning { background: #ffc107; }
.success { background: #198754; color: #fff; }
.danger { background: #dc3545; color: #fff; }
table {
  width: 1649px;
  margin-left: 135px;
  table-layout: fixed;
  border-collapse: collapse;
}
.c1 { width: 104px; }
.c2 { width: 301px; }
.c3 { width: 345px; }
.c4 { width: 220px; }
.c5 { width: 176px; }
.c6 { width: 201px; }
.c7 { width: 155px; }
.c8 { width: 147px; }
th, td { border: 1px solid #dee2e6; text-align: left; vertical-align: top; padding: 10px; }
thead th { letter-spacing: -0.420px; line-height: 31px; padding-bottom: 9px; }
thead tr { height: 51px; }
tbody tr { height: 59px; }
tbody tr:first-child { height: 60px; }
tbody tr:last-child { height: 60px; }
tbody th, tbody td { line-height: 32px; padding-bottom: 7px; }
tbody tr:nth-child(odd) { background: #f2f2f2; }
footer { margin-top: auto; height: 181px; flex: none; background: #e2e3e5; }
footer ul { height: 91px; padding-top: 1px; display: flex; justify-content: center; align-items: center; gap: 19.700px; color: #0d6efd; border-bottom: 1px solid #dfe0e2; }
footer p { margin: 0; padding-top: 20px; line-height: 32px; text-align: center; letter-spacing: -0.260px; color: #5d5e60; }

/* taskbar */
.taskbar {
  height: 59px;
  flex: none;
  display: flex;
  align-items: center;
  color: #fff;
  font-size: 14.600px;
  background: linear-gradient(90deg, #1b272c 0, #1c2429 400px, #1c2336 580px, #201a4c 740px, #2b1a44 820px, #371a3a 920px, #3c1247 1060px, #371450 1150px, #401040 1280px, #3e103a 1550px, #2e1a2e 1800px, #271a28 1919px);
  border-top: 1px solid #3b4347;
}
.weather { width: 475px; display: flex; padding: 0 0 2px 28px; line-height: 20px; letter-spacing: -0.200px; }
.weather .sun {
  width: 24px;
  height: 25px;
  margin: 8px 12px 0 0;
  border-radius: 50%;
  background: linear-gradient(135deg, #f6be28, #ee5f0a);
  position: relative;
}
.sun i {
  position: absolute;
  left: 11px;
  top: -10px;
  width: 20px;
  height: 20px;
  border-radius: 50%;
  background: #ff99a4;
  color: #2b1a1c;
  font-size: 13px;
  text-align: center;
}
.dim { color: #c9cccd; }
.start { width: 29px; height: 29px; }
.search {
  width: 275px;
  height: 40px;
  margin-left: 17px;
  border-radius: 20px;
  border: 1px solid rgba(255, 255, 255, .16);
  background: rgba(255, 255, 255, .14);
  display: flex;
  align-items: center;
  padding: 0 7px 0 14px;
  font-size: 16.500px;
  color: #d9d9e0;
}
.search span { flex: 1; margin-left: 11px; }
.art { width: 57px; height: 32px; }
.apps { display: flex; margin-left: 2px; }
.apps span { width: 55px; height: 59px; display: grid; place-items: center; position: relative; }
.apps svg { width: 30px; height: 30px; z-index: 1; }
.focus::before {
  content: "";
  position: absolute;
  left: 2px;
  top: 5px;
  width: 50px;
  height: 50px;
  border-radius: 5px;
  background: rgba(255, 255, 255, .08);
  border: 1px solid rgba(255, 255, 255, .05);
}
.running::after {
  content: "";
  position: absolute;
  bottom: 5px;
  left: 23px;
  width: 8px;
  height: 4px;
  border-radius: 2px;
  background: #a08ca4;
}
.focus::after { left: 17px; width: 20px; background: #dfa0e2; }
.pre { font: 700 8px "Open Sans", sans-serif; fill: #222; letter-spacing: .3px; }
.tray { margin-left: auto; display: flex; align-items: center; padding-right: 25px; }
.chev { width: 14px; height: 9px; margin-right: 22px; }
.cloud { width: 21px; height: 14px; margin-right: 25px; }
.lang { width: 27px; margin-right: 23px; font-size: 14.800px; }
.wifi { width: 20px; height: 16px; margin-right: 10px; }
.vol { width: 20px; height: 18px; margin-right: 10px; }
.bat { width: 20px; height: 18px; }
.clock { width: 99px; text-align: right; line-height: 20px; letter-spacing: 0; padding-bottom: 2px; }
.bell { width: 18px; height: 20px; margin-left: 10px; }
```
